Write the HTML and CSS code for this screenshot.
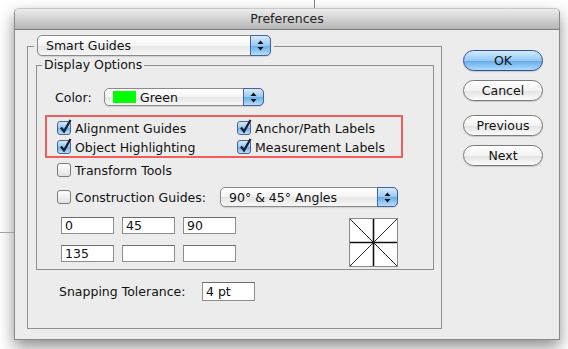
FILE: index.html
```html
<!DOCTYPE html>
<html lang="en">
<head>
  <meta charset="UTF-8" />
  <title>Preferences</title>
  <link rel="stylesheet" href="styles.css">
</head>
<body>
  <div class="backdrop-v"></div>
  <div class="backdrop-h"></div>

  <div class="window">
    <div class="titlebar">Preferences</div>

    <div class="content">
      <div class="group settings">
        <div class="group-head">
          <div class="popup popup-section">
            <span class="popup-label">Smart Guides</span>
            <span class="popup-arrows">
              <svg width="7" height="11" viewBox="0 0 7 11"><path d="M3.5 0.5 L6.5 4 L0.5 4 Z M0.5 7 L6.5 7 L3.5 10.5 Z" fill="#111"/></svg>
            </span>
          </div>
        </div>

        <div class="group display">
          <div class="legend">Display Options</div>

          <div class="color-row">
            <span class="color-label">Color:</span>
            <div class="popup popup-color">
              <span class="swatch"></span>
              <span class="popup-label">Green</span>
              <span class="popup-arrows">
                <svg width="7" height="11" viewBox="0 0 7 11"><path d="M3.5 0.5 L6.5 4 L0.5 4 Z M0.5 7 L6.5 7 L3.5 10.5 Z" fill="#111"/></svg>
              </span>
            </div>
          </div>

          <div class="highlight">
            <label class="option"><span class="check on"><svg width="14" height="16" viewBox="0 0 14 16"><path d="M3 8.5 L6 12.5 L12.5 1" fill="none" stroke="#1a1a2a" stroke-width="2.2"/></svg></span>Alignment Guides</label>
            <label class="option"><span class="check on"><svg width="14" height="16" viewBox="0 0 14 16"><path d="M3 8.5 L6 12.5 L12.5 1" fill="none" stroke="#1a1a2a" stroke-width="2.2"/></svg></span>Anchor/Path Labels</label>
            <label class="option"><span class="check on"><svg width="14" height="16" viewBox="0 0 14 16"><path d="M3 8.5 L6 12.5 L12.5 1" fill="none" stroke="#1a1a2a" stroke-width="2.2"/></svg></span>Object Highlighting</label>
            <label class="option"><span class="check on"><svg width="14" height="16" viewBox="0 0 14 16"><path d="M3 8.5 L6 12.5 L12.5 1" fill="none" stroke="#1a1a2a" stroke-width="2.2"/></svg></span>Measurement Labels</label>
          </div>

          <label class="option transform"><span class="check"></span>Transform Tools</label>

          <div class="construction-row">
            <label class="option construction"><span class="check"></span>Construction Guides:</label>
            <div class="popup popup-angles">
              <span class="popup-label">90° &amp; 45° Angles</span>
              <span class="popup-arrows">
                <svg width="7" height="11" viewBox="0 0 7 11"><path d="M3.5 0.5 L6.5 4 L0.5 4 Z M0.5 7 L6.5 7 L3.5 10.5 Z" fill="#111"/></svg>
              </span>
            </div>
          </div>

          <div class="angles-row">
            <div class="angle-fields">
              <div class="field">0</div>
              <div class="field">45</div>
              <div class="field">90</div>
              <div class="field">135</div>
              <div class="field"></div>
              <div class="field"></div>
            </div>
            <svg class="angle-preview" width="49" height="49" viewBox="0 0 49 49">
              <rect x="0.5" y="0.5" width="48" height="48" fill="#fff" stroke="#8a8a8a"/>
              <line x1="1" y1="1" x2="48" y2="48" stroke="#111" stroke-width="0.9"/>
              <line x1="48" y1="1" x2="1" y2="48" stroke="#111" stroke-width="0.9"/>
              <line x1="24.5" y1="1" x2="24.5" y2="48" stroke="#111" stroke-width="1.6"/>
              <line x1="1" y1="24.5" x2="48" y2="24.5" stroke="#111" stroke-width="1.6"/>
            </svg>
          </div>
        </div>

        <div class="snap-row">
          <span class="snap-label">Snapping Tolerance:</span>
          <div class="field field-snap">4 pt</div>
        </div>
      </div>

      <div class="buttons">
        <button class="btn btn-default">OK</button>
        <button class="btn">Cancel</button>
        <button class="btn btn-gap">Previous</button>
        <button class="btn">Next</button>
      </div>
    </div>
  </div>
</body>
</html>
```

FILE: styles.css
```css
* {
  margin: 0;
  padding: 0;
  box-sizing: border-box;
}

body {
  width: 568px;
  height: 349px;
  overflow: hidden;
  position: relative;
  background: #fff;
  font-family: "DejaVu Sans", sans-serif;
  font-size: 12.5px;
  color: #111;
}

/* stray guides of the document behind the dialog */
.backdrop-v {
  position: absolute;
  left: 314px;
  top: 0;
  width: 1px;
  height: 8px;
  background: #808080;
}

.backdrop-h {
  position: absolute;
  left: 0;
  top: 232px;
  width: 14px;
  height: 1px;
  background: #a0a0a0;
}

.window {
  margin: 8px 0 0 14px;
  width: 546px;
  height: 332px;
  background: #ececec;
  border: 1px solid #8a8a8a;
  border-top-color: #c8c8c8;
  border-radius: 5px 5px 0 0;
  box-shadow: 0 7px 16px rgba(0,0,0,0.45);
  display: flex;
  flex-direction: column;
}

.titlebar {
  height: 21px;
  line-height: 20px;
  text-align: center;
  color: #222;
  border-bottom: 1px solid #7c7c7c;
  border-radius: 4px 4px 0 0;
  background: linear-gradient(#ececec, #d2d2d2 50%, #b4b4b4);
}

.content {
  display: flex;
  padding: 5px 0 0 12px;
}

/* group boxes */
.group {
  border: 1px solid #8f8f8f;
}

.settings {
  width: 415px;
  height: 283px;
  margin-top: 11px;
}

.group-head {
  width: fit-content;
  margin: -12px 0 0 6px;
  padding: 0 3px;
  background: #ececec;
}

.display {
  height: 205px;
  margin: 9px 7px 0 8px;
}

.legend {
  width: fit-content;
  margin: -8px 0 0 5px;
  padding: 0 2px;
  line-height: 14px;
  background: #ececec;
}

/* popup buttons */
.popup {
  display: flex;
  align-items: center;
  border: 1px solid #8a8a8a;
  border-radius: 5px;
  background: linear-gradient(#ffffff, #f4f4f4 50%, #e6e6e6 52%, #f7f7f7);
  box-shadow: 0 1px 1px rgba(0,0,0,0.12);
}

.popup-label {
  flex: 1;
  padding-left: 8px;
  white-space: nowrap;
}

.popup-arrows {
  align-self: stretch;
  width: 21px;
  margin: -1px -1px -1px 0;
  display: flex;
  align-items: center;
  justify-content: center;
  border: 1px solid #4a5f9e;
  border-radius: 0 5px 5px 0;
  background: linear-gradient(#d6ebfc, #98c9f1 50%, #6aaeea 52%, #b2defb);
}

.popup-section {
  width: 234px;
  height: 21px;
}

.color-row {
  display: flex;
  align-items: center;
  margin-top: 16px;
  padding-left: 18px;
}

.color-label {
  width: 49px;
}

.popup-color {
  width: 160px;
  height: 18px;
}

.popup-color .popup-label {
  padding-left: 4px;
}

.swatch {
  width: 23px;
  height: 12px;
  margin-left: 8px;
  background: #00ff00;
}

/* checkbox options */
.highlight {
  width: 358px;
  margin: 9px 0 0 8px;
  padding: 4px 0 2px 10px;
  border: 2px solid #ef5e5c;
  display: grid;
  grid-template-columns: 180px auto;
  row-gap: 5px;
}

.option {
  display: flex;
  align-items: center;
  gap: 4px;
  height: 14px;
  white-space: nowrap;
}

.check {
  position: relative;
  width: 14px;
  height: 14px;
  border: 1px solid #7a7a7a;
  border-radius: 3px;
  background: linear-gradient(#ffffff, #f0f0f0 50%, #e2e2e2);
}

.check.on {
  border-color: #52628e;
  background: linear-gradient(#d3e9fc, #93c6f0 50%, #6cafe9 52%, #b6e0fb);
}

.check svg {
  position: absolute;
  left: 0;
  top: -3px;
  overflow: visible;
}

.transform {
  margin: 5px 0 0 20px;
}

.construction-row {
  display: flex;
  align-items: center;
  margin-top: 10px;
  padding-left: 20px;
}

.construction {
  width: 163px;
}

.popup-angles {
  width: 178px;
  height: 20px;
}

/* angle inputs */
.angles-row {
  display: flex;
  margin-top: 10px;
  padding-left: 24px;
}

.angle-fields {
  display: grid;
  grid-template-columns: repeat(3, 53px);
  column-gap: 8px;
  row-gap: 11px;
  align-content: start;
}

.field {
  height: 17px;
  line-height: 15px;
  padding-left: 3px;
  background: #fff;
  border: 1px solid #8e8e8e;
  border-top-color: #6c6c6c;
}

.angle-preview {
  margin: 1px 0 0 113px;
}

.snap-row {
  display: flex;
  align-items: center;
  margin-top: 12px;
  padding-left: 31px;
}

.snap-label {
  width: 143px;
}

.field-snap {
  width: 53px;
  height: 19px;
  line-height: 17px;
}

/* push buttons */
.buttons {
  display: flex;
  flex-direction: column;
  width: 80px;
  margin: 15px 0 0 21px;
}

.btn {
  height: 21px;
  margin-top: 9px;
  font-family: inherit;
  font-size: 12.5px;
  color: #111;
  border: 1px solid #7a7a7a;
  border-radius: 11px;
  background: linear-gradient(#ffffff, #f3f3f3 50%, #e3e3e3 52%, #fbfbfb);
  box-shadow: 0 1px 1px rgba(0,0,0,0.15);
}

.btn-default {
  margin-top: 0;
  border-color: #2e4f96;
  background: linear-gradient(#d4ecfd, #93c9f3 50%, #63aaea 52%, #abdcfb);
}

.btn-gap {
  margin-top: 14px;
}
```
